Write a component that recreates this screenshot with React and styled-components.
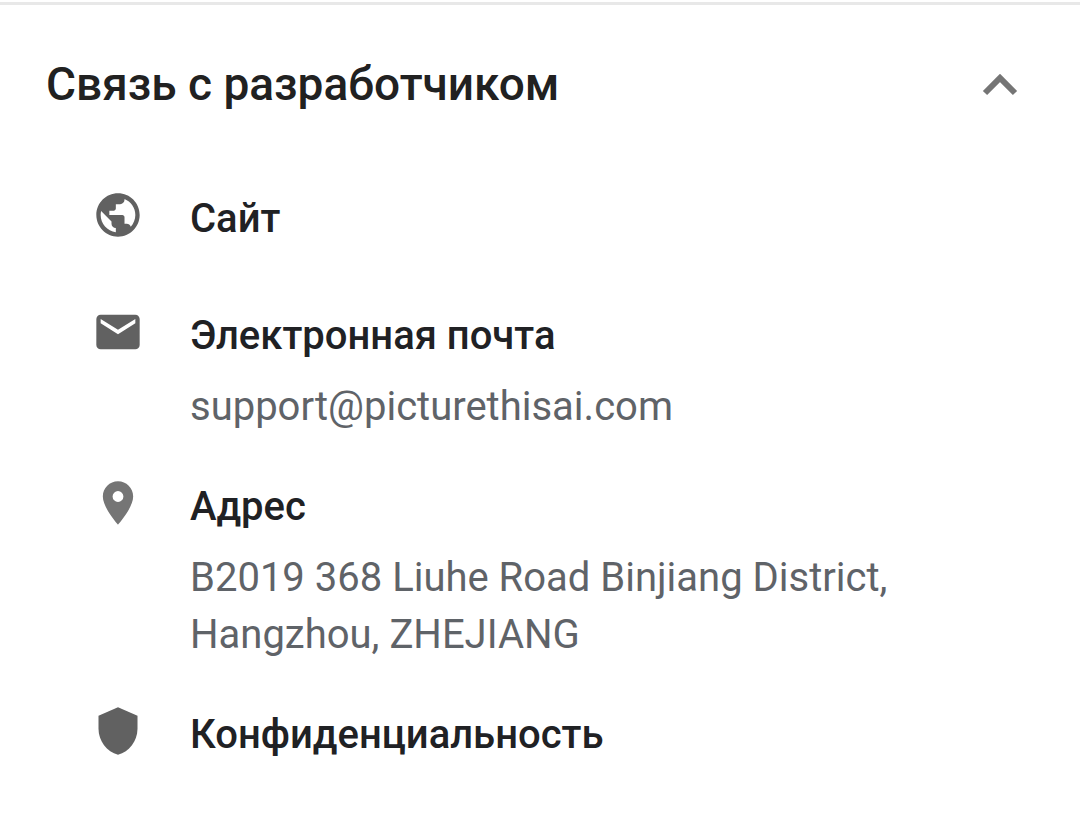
import React, { useState } from 'react';
import styled, { createGlobalStyle } from 'styled-components';

const GlobalStyle = createGlobalStyle`
  * {
    box-sizing: border-box;
  }

  body {
    margin: 0;
    background: #fff;
    color: #202124;
    font-family: Roboto, "Noto Sans", sans-serif;
  }
`;

const Section = styled.section`
  padding: 0 46px 24px;
  border-top: 2px solid #fff;
  box-shadow: inset 0 3px 0 #e8e8e8;
`;

const Heading = styled.h2`
  margin: 0;
  color: #212121;
  font-size: 46px;
  font-weight: 500;
`;

const Toggle = styled.button`
  display: flex;
  align-items: center;
  justify-content: space-between;
  width: 100%;
  padding: 54px 0;
  border: 0;
  background: none;
  color: inherit;
  font: inherit;
  line-height: 56px;
  text-align: left;
  cursor: pointer;
`;

const Chevron = styled.svg`
  flex: none;
  width: 68px;
  height: 56px;
  fill: none;
  stroke: #757575;
  stroke-width: 6px;
  transform: ${({ $open }) => ($open ? 'none' : 'rotate(180deg)')};
`;

const ContactList = styled.ul`
  display: flex;
  flex-direction: column;
  gap: 42px;
  margin: 0;
  padding: 23px 48px 0 46px;
  list-style: none;
`;

const Contact = styled.li`
  display: flex;
  align-items: flex-start;
  gap: 46px;
  min-height: 75px;
`;

const ContactIcon = styled.svg`
  flex: none;
  width: 52px;
  height: 52px;
  fill: ${({ $color }) => $color || '#616161'};
`;

const Label = styled.h3`
  margin: 0;
  font-size: 40px;
  font-weight: 500;
  line-height: 60px;
`;

const Details = styled.p`
  margin: 12px 0 0;
  color: #5f6368;
  font-size: 40px;
  line-height: 57px;
`;

const contacts = [
  {
    label: 'Сайт',
    icon: 'M12 2C6.48 2 2 6.48 2 12s4.48 10 10 10 10-4.48 10-10S17.52 2 12 2zm-1 17.93c-3.95-.49-7-3.85-7-7.93 0-.62.08-1.21.21-1.79L9 15v1c0 1.1.9 2 2 2v1.93zm6.9-2.54c-.26-.81-1-1.39-1.9-1.39h-1v-3c0-.55-.45-1-1-1H8v-2h2c.55 0 1-.45 1-1V7h2c1.1 0 2-.9 2-2v-.41c2.93 1.19 5 4.06 5 7.41 0 2.08-.8 3.97-2.1 5.39z',
  },
  {
    label: 'Электронная почта',
    details: 'support@picturethisai.com',
    icon: 'M20 4H4c-1.1 0-1.99.9-1.99 2L2 18c0 1.1.9 2 2 2h16c1.1 0 2-.9 2-2V6c0-1.1-.9-2-2-2zm0 4l-8 5-8-5V6l8 5 8-5v2z',
  },
  {
    label: 'Адрес',
    details: 'B2019 368 Liuhe Road Binjiang District, Hangzhou, ZHEJIANG',
    color: '#757575',
    icon: 'M12 2C8.13 2 5 5.13 5 9c0 5.25 7 13 7 13s7-7.75 7-13c0-3.87-3.13-7-7-7zm0 9.5a2.5 2.5 0 1 1 0-5 2.5 2.5 0 0 1 0 5z',
  },
  {
    label: 'Конфиденциальность',
    icon: 'M12 1L3 5v6c0 5.55 3.84 10.74 9 12 5.16-1.26 9-6.45 9-12V5l-9-4z',
  },
];

const App = () => {
  const [open, setOpen] = useState(true);

  return (
    <Section>
      <GlobalStyle />
      <Toggle type="button" aria-expanded={open} onClick={() => setOpen(!open)}>
        <Heading as="span">Связь с разработчиком</Heading>
        <Chevron viewBox="0 0 68 56" $open={open} aria-hidden="true">
          <path d="M19 37l15-15 15 15" />
        </Chevron>
      </Toggle>

      {open && (
        <ContactList>
          {contacts.map((item) => (
            <Contact key={item.label}>
              <ContactIcon viewBox="0 0 24 24" $color={item.color} aria-hidden="true">
                <path d={item.icon} />
              </ContactIcon>
              <div>
                <Label>{item.label}</Label>
                {item.details && <Details>{item.details}</Details>}
              </div>
            </Contact>
          ))}
        </ContactList>
      )}
    </Section>
  );
};

export default App;
